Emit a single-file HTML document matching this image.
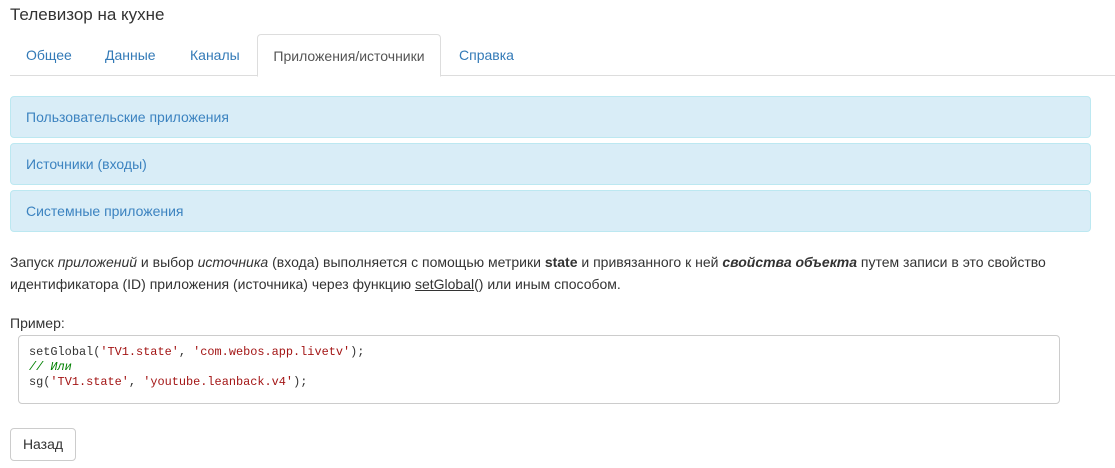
<!DOCTYPE html>
<html><head><meta charset="utf-8"><style>
body{margin:0;background:#fff;font-family:"Liberation Sans",sans-serif;font-size:14px;color:#333;width:1115px;height:468px;overflow:hidden;position:relative}
h1{position:absolute;left:10px;top:5px;margin:0;font-size:17px;font-weight:normal;color:#333}
.tabs{position:absolute;left:10px;top:34px;width:1105px;height:41px;border-bottom:1px solid #ddd}
.tab{position:absolute;top:0;height:41px;line-height:42px;color:#337ab7;font-size:14px}
.tab.act{border:1px solid #ddd;border-bottom:1px solid #fff;border-radius:4px 4px 0 0;color:#555;height:41px;background:#fff}
.panel{position:absolute;left:10px;width:1079px;height:40px;background:#d9edf7;border:1px solid #bce8f1;border-radius:4px;color:#31708f}
.panel span{position:absolute;left:15px;top:12px;color:#3c83c0}
p{position:absolute;margin:0;left:10px;line-height:22px}
pre{position:absolute;left:18px;top:335px;width:1020px;height:49px;margin:0;padding:9px 10px;border:1px solid #ccc;border-radius:4px;background:#fff;font-family:"Liberation Mono",monospace;font-size:11.9px;line-height:15px;color:#333}
.s{color:#a31515}.c{color:#008000;font-style:italic}
.btn{position:absolute;left:10px;top:428px;width:64px;height:31px;border:1px solid #ccc;border-radius:4px;text-align:center;line-height:31px;color:#333}
</style></head><body>
<h1>Телевизор на кухне</h1>
<div class="tabs">
<div class="tab" style="left:16px">Общее</div>
<div class="tab" style="left:95px">Данные</div>
<div class="tab" style="left:180px">Каналы</div>
<div class="tab act" style="left:247px;width:182px;text-align:center">Приложения/источники</div>
<div class="tab" style="left:449px">Справка</div>
</div>
<div class="panel" style="top:96px"><span>Пользовательские приложения</span></div>
<div class="panel" style="top:143px"><span>Источники (входы)</span></div>
<div class="panel" style="top:190px"><span>Системные приложения</span></div>
<p style="top:251px">Запуск <i>приложений</i> и выбор <i>источника</i> (входа) выполняется с помощью метрики <b>state</b> и привязанного к ней <b><i>свойства объекта</i></b> путем записи в это свойство<br>идентификатора (ID) приложения (источника) через функцию <u>setGlobal</u>() или иным способом.</p>
<p style="top:312px">Пример:</p>
<pre>setGlobal(<span class="s">'TV1.state'</span>, <span class="s">'com.webos.app.livetv'</span>);
<span class="c">// Или</span>
sg(<span class="s">'TV1.state'</span>, <span class="s">'youtube.leanback.v4'</span>);</pre>
<div class="btn">Назад</div>
</body></html>
